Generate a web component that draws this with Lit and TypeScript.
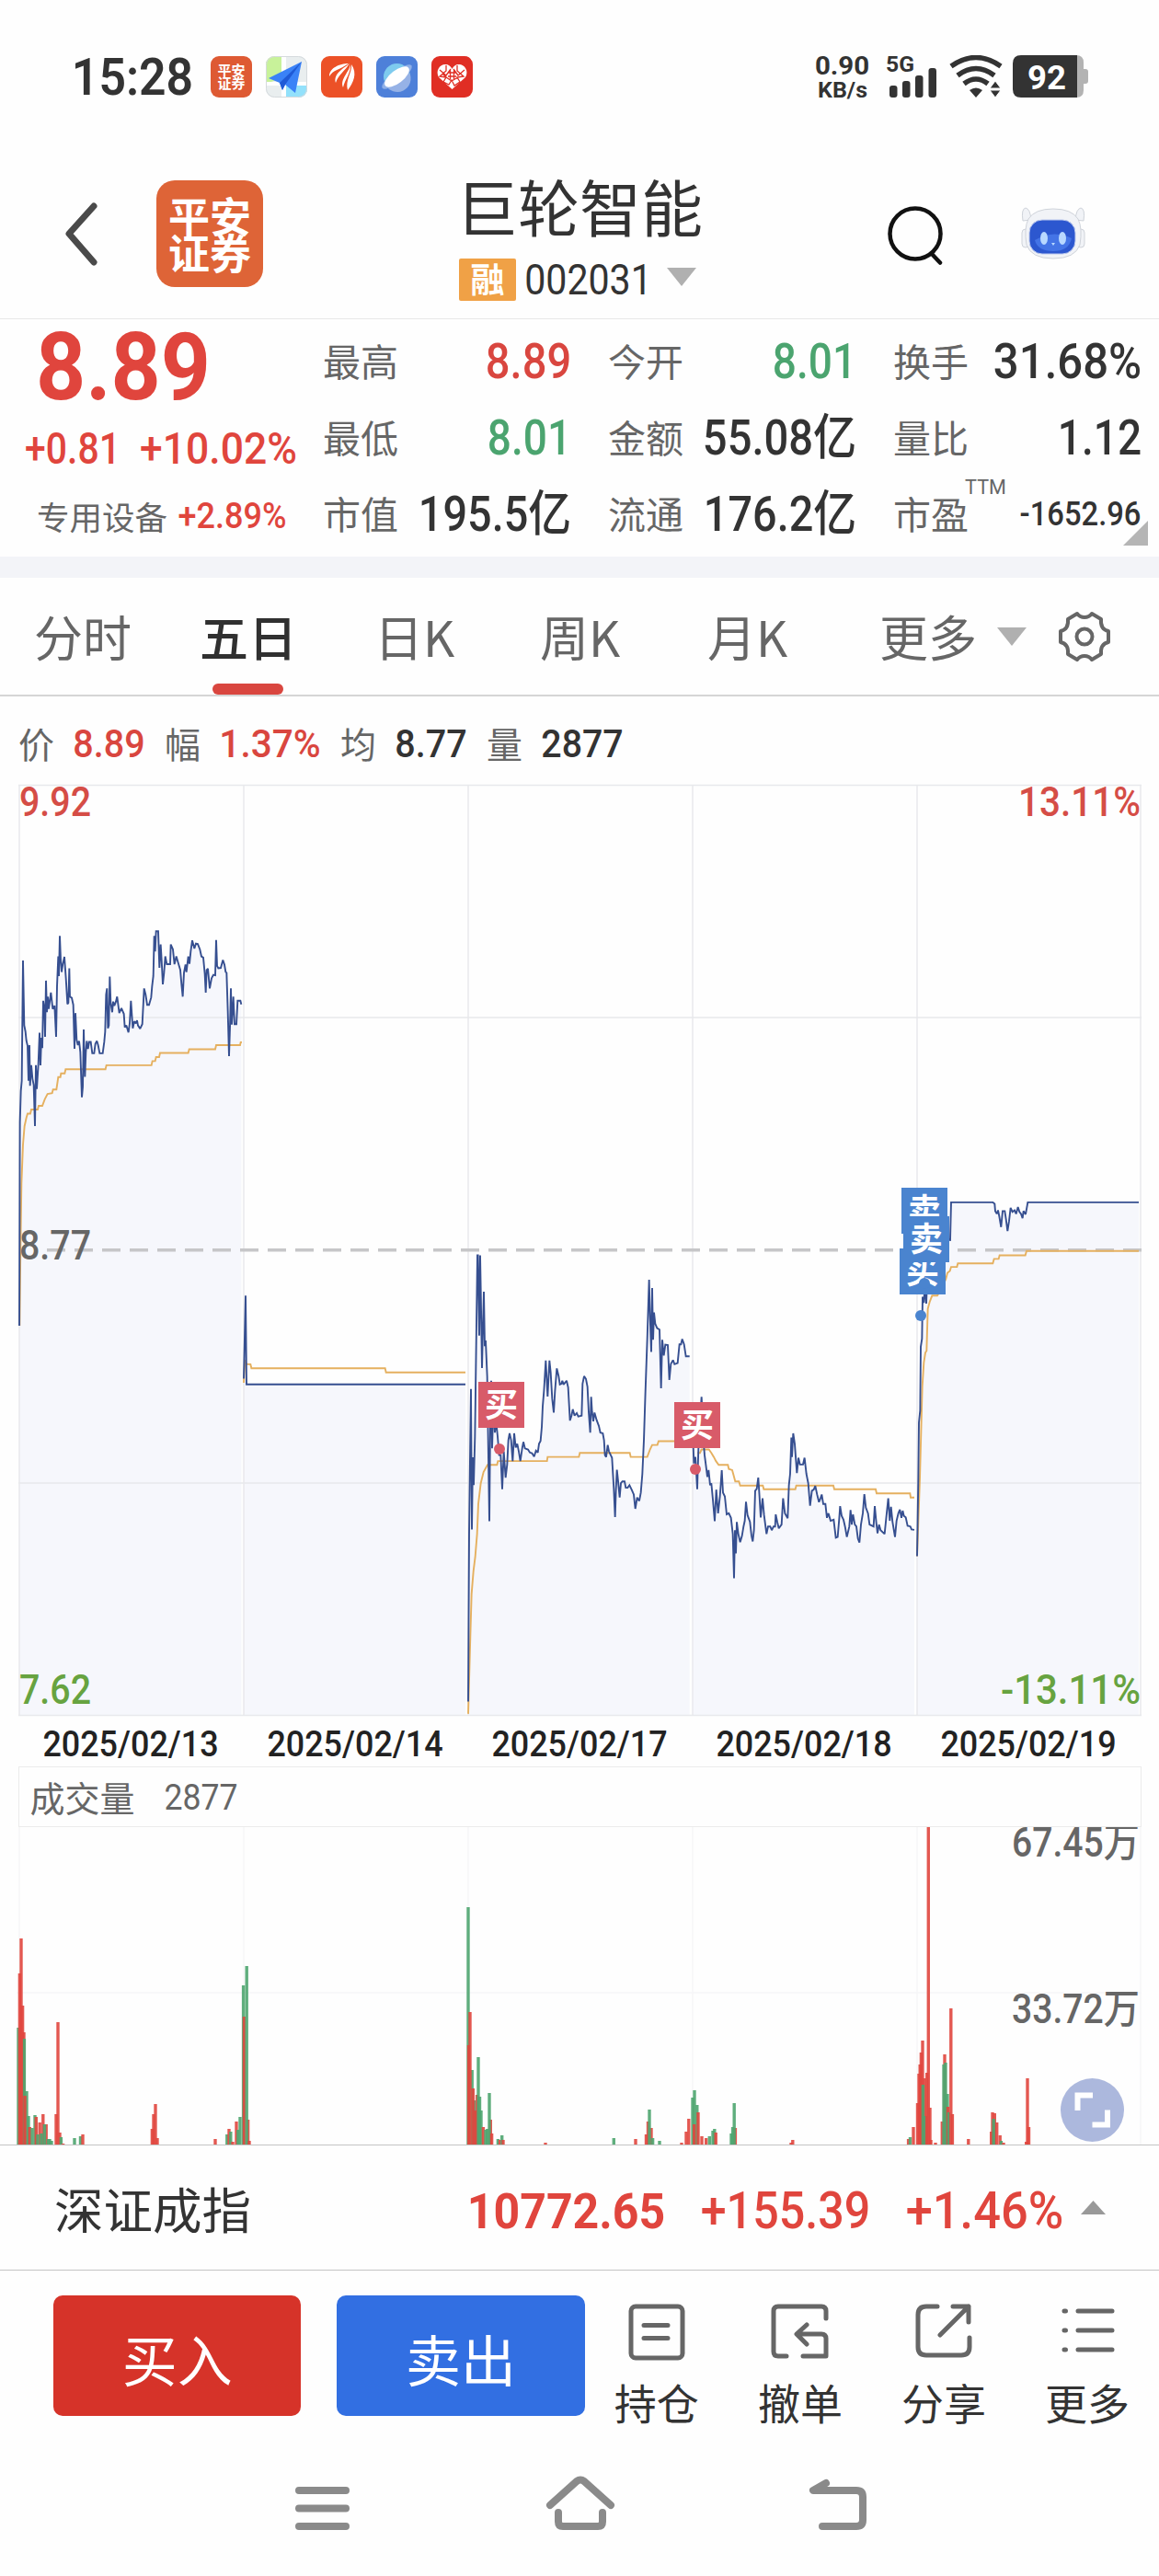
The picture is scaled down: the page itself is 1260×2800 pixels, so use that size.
import { LitElement, html, svg, css } from 'lit';
import { customElement, property } from 'lit/decorators.js';

// Traced in per-session units, see the matching transform on each session.
interface Session {
  transform: string;
  floor: number;
  price: string;
  average: string;
}

type Bar = [x: number, height: number, color: 'r' | 'g'];

const DAY_1 =
  '63,1346 65,850 68,775 71,750 75,457 79,615 83,630 86,652 90,665 93,750 96,663 98,762 102,712 106,745 110,760 114,860 117,712 120,770 125,710 129,633 132,712 135,645 138,670 141,555 145,575 147,643 150,506 153,583 156,545 159,575 166,535 172,575 178,567 183,643 186,520 190,447 192,495 195,397 198,455 201,485 205,465 210,448 215,500 220,563 223,560 226,476 228,545 234,548 239,565 243,672 246,585 250,650 254,663 258,653 262,680 267,790 270,765 273,625 277,740 280,680 283,653 287,672 291,655 296,655 301,683 307,683 311,660 316,653 320,663 325,683 335,683 340,655 343,630 346,540 349,525 352,622 355,615 358,496 361,560 366,583 369,557 373,567 378,557 382,545 389,585 396,573 404,587 407,620 412,615 419,632 423,610 427,555 433,622 438,605 443,610 447,603 450,615 457,623 464,612 470,525 475,540 480,565 486,565 493,547 496,520 500,495 503,397 506,435 509,386 516,386 520,475 524,418 527,455 531,515 535,487 539,447 544,466 555,466 557,418 564,430 569,466 575,447 582,465 588,480 592,515 596,545 600,487 605,467 608,485 614,447 618,465 622,435 627,408 634,428 639,416 645,417 652,430 657,447 663,450 668,490 671,535 674,480 678,477 684,525 690,500 696,492 702,493 705,407 708,470 712,476 720,475 727,456 732,467 736,485 739,487 743,580 747,690 750,620 753,525 756,613 761,545 765,612 771,612 775,555 784,555 787,564';
const DAY_3 =
  '87,1346 90,900 93,700 96,514 99,888 102,696 105,770 109,640 113,400 117,158 119,158 123,372 126,158 128,250 132,458 135,350 138,255 141,400 144,385 149,480 153,700 156,866 159,600 162,492 165,672 169,560 174,630 178,600 183,640 188,690 193,690 198,781 203,680 209,750 214,715 218,650 222,632 227,650 232,706 237,632 242,670 247,660 252,680 257,706 263,672 267,655 272,672 282,675 288,683 295,685 302,694 308,678 314,683 318,660 323,652 327,615 330,560 334,520 340,438 346,534 352,438 356,470 361,540 366,577 370,520 376,459 382,480 386,502 391,500 394,492 398,502 408,492 413,510 419,598 424,585 428,568 434,585 441,578 446,587 457,585 460,500 465,480 471,487 476,508 480,575 485,630 488,535 491,575 495,600 499,577 506,597 513,612 518,630 526,632 530,650 533,690 537,695 542,663 546,680 556,697 562,780 566,855 569,780 572,729 576,760 581,803 585,765 590,760 597,760 601,777 607,777 613,770 620,782 627,795 632,833 638,803 645,812 650,790 655,740 660,650 665,520 671,380 677,223 680,320 684,415 687,245 690,383 693,310 697,340 703,352 711,356 716,512 720,383 725,425 730,396 738,397 743,490 748,447 755,437 760,448 770,445 776,395 781,395 785,381 791,395 797,427 809,427';
const DAY_4 =
  '820,640 823,712 828,695 830,720 834,781 838,670 843,600 848,535 852,600 855,660 858,690 862,715 867,748 871,730 876,770 880,765 885,808 891,866 896,782 902,845 908,800 914,730 918,790 924,800 930,848 937,845 944,857 950,900 954,1018 957,890 960,952 963,868 968,900 974,922 980,905 985,880 989,865 993,814 998,850 1006,868 1011,905 1015,920 1019,890 1023,785 1028,780 1033,750 1037,800 1041,856 1047,805 1052,850 1060,900 1065,880 1072,880 1077,890 1083,880 1088,880 1090,848 1095,868 1100,885 1109,875 1114,805 1120,845 1129,858 1133,770 1137,740 1141,643 1143,695 1147,632 1152,660 1159,738 1164,697 1169,715 1179,715 1184,697 1190,740 1196,765 1202,825 1208,785 1214,782 1219,772 1225,795 1231,815 1236,805 1240,795 1245,820 1252,820 1257,857 1262,845 1269,865 1279,862 1286,910 1292,908 1297,860 1300,826 1305,852 1311,862 1316,880 1322,908 1330,880 1334,836 1338,875 1342,848 1348,875 1353,880 1358,912 1363,923 1368,875 1374,845 1379,794 1384,830 1391,845 1396,875 1409,880 1413,826 1418,870 1422,898 1427,875 1432,890 1445,900 1450,860 1457,805 1462,865 1466,828 1471,868 1479,908 1484,865 1490,845 1495,835 1500,857 1504,838 1508,852 1514,856 1520,878 1529,880 1533,888 1542,889';

const T_WEEK1 = 'translate(0 840) scale(0.33333 0.44643)';
const T_WEEK2 = 'translate(480 1300) scale(0.33333 0.40816)';
const T_LAST = 'translate(880 1260) scale(0.33333 0.43367)';

const SESSIONS: Session[] = [
  {
    transform: T_WEEK1,
    floor: 2295,
    price: DAY_1,
    average:
      '64,1346 67,1150 70,1000 75,905 80,860 86,840 90,830 99,830 102,820 123,820 126,811 138,811 146,795 155,782 170,780 173,771 184,771 190,741 197,741 199,732 211,732 214,722 344,722 347,712 494,712 497,702 506,702 509,692 519,692 522,682 614,682 617,673 702,673 705,663 783,663 785,656 789,656',
  },
  {
    transform: T_WEEK1,
    floor: 2295,
    price: '795,1475 801,1273 804,1489 1518,1489',
    average: '795,1485 799,1430 804,1440 817,1440 820,1450 1256,1450 1259,1460 1518,1460',
  },
  {
    transform: T_WEEK2,
    floor: 1383,
    price: DAY_3,
    average:
      '87,1379 93,1200 98,1060 104,1000 110,960 116,900 120,820 128,765 137,735 150,716 181,716 184,706 344,706 346,695 448,695 451,684 614,684 617,695 671,695 680,675 687,663 704,663 708,653 805,653',
  },
  {
    transform: T_WEEK2,
    floor: 1383,
    price: DAY_4,
    average:
      '835,684 843,684 848,675 872,675 880,684 888,695 895,706 904,716 934,716 937,727 948,730 953,745 958,760 970,760 974,771 1048,771 1051,781 1154,781 1157,771 1278,771 1281,781 1416,781 1419,792 1528,792 1530,803 1542,803',
  },
  {
    transform: T_LAST,
    floor: 1394,
    price:
      '351,995 355,800 357,660 361,630 363,470 367,450 369,345 373,360 376,320 381,362 384,300 400,240 430,200 459,203 462,108 598,108 604,112 606,130 611,137 615,128 619,143 625,170 630,130 637,130 641,150 646,180 651,155 656,122 662,132 669,128 674,137 680,120 685,132 690,137 695,148 698,130 705,138 712,108 1074,108',
    average:
      '351,995 360,800 368,570 373,510 378,485 382,480 386,375 392,358 400,342 417,342 430,325 445,300 450,285 458,280 462,270 481,270 484,261 598,261 602,250 617,250 620,241 704,241 708,230 1074,230',
  },
];

const BARS: Bar[] = [
  [20, 127, 'g'], [21.4, 186, 'r'], [24.6, 151, 'r'], [26, 122, 'r'], [26.4, 115, 'g'], [23, 224, 'r'],
  [29, 58, 'g'], [27, 53, 'r'], [31, 31, 'g'], [32.3, 19, 'r'], [35, 18, 'g'], [38, 32, 'g'],
  [39.3, 30, 'r'], [43.2, 24, 'r'], [41, 11, 'g'], [46.8, 33, 'r'], [45, 12, 'g'], [50.2, 22, 'r'],
  [48.4, 22, 'g'], [52.5, 6, 'g'], [54, 6, 'g'], [56, 4, 'g'], [61, 33, 'r'], [63, 133, 'r'],
  [65, 13, 'r'], [66.4, 8, 'g'], [68.6, 1, 'r'], [81, 7, 'g'], [87.5, 9, 'g'], [90, 11, 'r'],
  [165.4, 17, 'r'], [167, 33, 'r'], [169, 44, 'r'], [171, 7, 'r'], [234, 6, 'r'], [246.8, 11, 'g'],
  [249, 17, 'r'], [250.8, 14, 'g'], [253, 3, 'r'], [257, 25, 'r'], [258.8, 16, 'g'], [261, 30, 'g'],
  [264.6, 173, 'g'], [265.5, 139, 'r'], [269.6, 27, 'r'], [268.2, 194, 'g'], [271, 4, 'r'],
  [509, 258, 'g'], [509.6, 108, 'r'], [513.2, 81, 'g'], [511, 144, 'r'], [515.4, 48, 'g'], [514.3, 61, 'r'],
  [517, 37, 'r'], [518.6, 54, 'r'], [521.5, 52, 'g'], [520, 95, 'g'], [523, 37, 'g'], [525.4, 19, 'r'],
  [528, 16, 'g'], [529.8, 17, 'g'], [533.3, 27, 'r'], [532, 56, 'g'], [534.6, 12, 'r'], [541.4, 6, 'g'],
  [543.6, 5, 'r'], [545.7, 10, 'g'], [547, 5, 'r'], [593, 2, 'r'], [667.3, 7, 'g'], [691, 6, 'r'],
  [702.5, 11, 'r'], [704.5, 25, 'r'], [708, 18, 'r'], [706, 38, 'g'], [709.6, 7, 'g'], [717, 4, 'g'],
  [741, 2, 'r'], [746, 14, 'r'], [748.8, 28, 'r'], [753, 51, 'g'], [757.8, 43, 'g'], [755, 59, 'g'],
  [754.7, 22, 'r'], [759, 35, 'r'], [763, 9, 'r'], [767.7, 7, 'r'], [771.3, 9, 'g'], [775, 15, 'g'],
  [776.8, 17, 'g'], [778.2, 13, 'r'], [795, 12, 'g'], [796.6, 19, 'g'], [799.4, 18, 'r'], [798.2, 45, 'g'],
  [860, 2, 'r'], [861.8, 5, 'r'], [987.6, 6, 'r'], [989.5, 8, 'g'], [993, 19, 'r'], [997.5, 45, 'r'],
  [999, 77, 'r'], [1000.2, 87, 'r'], [1001.4, 100, 'r'], [1003, 113, 'r'], [1005, 72, 'r'], [1003.4, 65, 'g'],
  [1006.4, 31, 'g'], [1007.7, 78, 'r'], [1011, 40, 'r'], [1009.3, 346, 'r'], [1012, 5, 'r'], [1017, 2, 'r'],
  [1024.3, 25, 'r'], [1027, 98, 'r'], [1026, 87, 'g'], [1028, 89, 'g'], [1030, 55, 'g'], [1030.5, 41, 'r'],
  [1031.5, 35, 'g'], [1033.8, 148, 'r'], [1035.4, 33, 'r'], [1052.8, 6, 'r'], [1077.7, 14, 'r'],
  [1079, 35, 'r'], [1081.3, 34, 'r'], [1080.2, 28, 'g'], [1083.7, 24, 'r'], [1087.2, 10, 'r'],
  [1088.4, 4, 'g'], [1091, 2, 'r'], [1115.7, 3, 'r'], [1118.5, 19, 'r'], [1117, 72, 'r'],
];

const GRID_X = [21, 265, 509, 753, 997, 1240];

const CAP_HEIGHT = 0.711;

/** Narrow numerals: `cap` is the digit height, `width` the inked width. */
function fit(text: string, cap: number, width: number, weight = 500) {
  const size = cap / CAP_HEIGHT;
  return html`<svg class="fit" width=${width} height=${cap}>
    <text
      x=${-size * 0.04}
      y=${cap}
      font-size=${size}
      font-weight=${weight}
      textLength=${width + size * 0.08}
      lengthAdjust="spacingAndGlyphs"
    >${text}</text>
  </svg>`;
}

const fitStyles = css`
  .fit {
    display: block;
    flex: none;
    overflow: visible;
    fill: currentColor;
    font-family: Roboto, 'Noto Sans CJK SC', sans-serif;
  }
`;

@customElement('status-bar')
export class StatusBar extends LitElement {
  static styles = [
    fitStyles,
    css`
      :host {
        display: flex;
        align-items: center;
        box-sizing: border-box;
        height: 162px;
        padding: 4px 77px 0 80px;
        color: #333;
      }
      .apps {
        display: flex;
        gap: 15px;
        margin-left: 21px;
      }
      .apps svg {
        display: block;
      }
      .tile {
        font: 700 15px 'Noto Sans CJK SC', sans-serif;
      }
      .speed {
        display: flex;
        flex-direction: column;
        align-items: center;
        gap: 8px;
        margin-left: auto;
      }
      .net {
        margin-left: 19px;
      }
      .net text,
      .battery text {
        font-family: Roboto, sans-serif;
        font-weight: 700;
      }
      .wifi {
        margin-left: 11px;
      }
      .battery {
        margin-left: 11px;
      }
    `,
  ];

  render() {
    return html`
      ${fit('15:28', 39, 128, 600)}
      <div class="apps">
        <svg width="45" height="45">
          <rect width="45" height="45" rx="9" fill="#de5a33" />
          <g class="tile" fill="#fff">
            <text x="7.5" y="21">平安</text>
            <text x="7.5" y="35">证券</text>
          </g>
        </svg>
        <svg width="45" height="45">
          <clipPath id="map"><rect width="45" height="45" rx="9" /></clipPath>
          <g clip-path="url(#map)">
            <rect width="45" height="45" fill="#e9eeef" />
            <path d="M0 0H17V24L0 30Z" fill="#c8f29a" />
            <path d="M22 31H45V45H22Z" fill="#93e1fb" />
            <path d="M17 0h5v45h-5zM0 28h45v4H0z" fill="#fff" />
          </g>
          <path d="M39 6 3 24l12 5 3 8 3-6 11 9Z" fill="#3a82f7" />
          <path d="M39 6 15 29l3 8 3-6Z" fill="#1f5ad6" />
          <rect x=".5" y=".5" width="44" height="44" rx="9" fill="none" stroke="#d5dadd" />
        </svg>
        <svg width="45" height="45">
          <rect width="45" height="45" rx="9" fill="#ec5127" />
          <g fill="#fff">
            <path d="M30 8C20 8 9 13 9 22c4-7 11-7 21-14Z" />
            <path d="M31 8C25 13 13 19 16 29c3-9 10-13 15-21Z" />
            <path d="M32 8C32 16 20 25 24 34c2-9 9-16 8-26Z" />
            <path d="M33 9c1 9-7 17-4 28 6-8 11-18 4-28Z" />
          </g>
        </svg>
        <svg width="45" height="45">
          <rect width="45" height="45" rx="9" fill="#4e80d9" />
          <circle cx="22.500" cy="22.500" r="14.500" fill="#7ecbee" />
          <path d="M10 31A14.500 14.500 0 0 0 36 18Z" fill="#96b2e6" />
          <ellipse cx="22.500" cy="22.500" rx="20" ry="6" transform="rotate(-38 22.500 22.500)" fill="#8fb0e8" />
          <ellipse cx="22.500" cy="22.500" rx="16" ry="7" transform="rotate(-38 22.500 22.500)" fill="#fff" />
        </svg>
        <svg width="45" height="45">
          <rect width="45" height="45" rx="9" fill="#e02e24" />
          <path
            d="M22.500 36 8 23C4 16 9 9 15 9c4 0 6 2 7.500 5C24 11 26 9 30 9c6 0 11 7 7 14Z"
            fill="#fff"
          />
          <path
            d="M9 15l7 6 5-7M16 10v6l-7 6 7 1-3 5 6 3 3-5 3 6 6-4-3-5 7-1-7-6v-6M36 15l-7 6-5-7M18 18h9M18 22h9M20.500 15v10M24.500 15v10M16 23l6 4 7-4M12 19l4 4"
            fill="none"
            stroke="#e02e24"
            stroke-width="1.300"
          />
        </svg>
      </div>
      <div class="speed">${fit('0.90', 20, 57, 700)}${fit('KB/s', 17, 52, 700)}</div>
      <svg class="net" width="58" height="46">
        <text x="0" y="18" font-size="24" textLength="31" lengthAdjust="spacingAndGlyphs" fill="#333">5G</text>
        <g fill="#333">
          <rect x="4" y="33" width="8.500" height="13" rx="3" />
          <rect x="18" y="28" width="8.500" height="18" rx="3" />
          <rect x="32" y="22" width="8.500" height="24" rx="3" />
          <rect x="46.500" y="14" width="8.500" height="32" rx="3" />
        </g>
      </svg>
      <svg class="wifi" width="58" height="46">
        <g fill="none" stroke="#333" stroke-width="5.500">
          <path d="M2 12Q29-7 56 12" />
          <path d="M9 22Q29 7 49 22" />
          <path d="M16 31Q29 21 42 31" />
        </g>
        <path d="M22 38q7-5 14 0l-7 8z" fill="#333" />
        <path d="M50 28l6 8H44zM44 38h12l-6 8z" fill="#333" stroke="#fff" stroke-width="1" />
      </svg>
      <svg class="battery" width="82" height="46">
        <path d="M66 0h3q8 0 8 8v30q0 8-8 8h-3zM77 15h2q3 0 3 3v10q0 3-3 3h-2z" fill="#b3b3b3" />
        <path d="M9 0H70V46H9Q0 46 0 37V9Q0 0 9 0Z" fill="#333" />
        <text x="16" y="37" font-size="37" textLength="42" lengthAdjust="spacingAndGlyphs" fill="#fff">92</text>
      </svg>
    `;
  }
}

@customElement('stock-header')
export class StockHeader extends LitElement {
  static styles = [
    fitStyles,
    css`
      :host {
        display: flex;
        align-items: center;
        height: 184px;
        padding-left: 68px;
        border-bottom: 1px solid #e8e8e8;
        color: #333;
      }
      svg {
        flex: none;
      }
      .logo {
        display: flex;
        flex-direction: column;
        justify-content: center;
        align-items: center;
        width: 116px;
        height: 116px;
        margin-left: 64px;
        border-radius: 20px;
        background: #de6437;
        color: #fff;
        font: 700 45px/40px 'Noto Sans CJK SC', sans-serif;
      }
      .name {
        width: 270px;
        margin-left: 213px;
        padding-top: 7px;
      }
      .title {
        margin-left: -3px;
        font: 400 67px/67px 'Noto Sans CJK SC', sans-serif;
        white-space: nowrap;
      }
      .code {
        display: flex;
        align-items: center;
        margin-top: 25px;
      }
      .tag {
        width: 62px;
        height: 46px;
        margin-right: 11px;
        border-radius: 2px;
        background: #f0a146;
        color: #fff;
        font: 700 37px/43px 'Noto Sans CJK SC', sans-serif;
        text-align: center;
      }
      .drop {
        margin: -5px 0 0 18px;
      }
      .search {
        margin-left: 194px;
      }
      .robot {
        margin-left: 81px;
      }
    `,
  ];

  render() {
    return html`
      <svg width="38" height="70">
        <path d="M34 5 7 35 34 66" fill="none" stroke="#4a4a4a" stroke-width="7" stroke-linecap="round" stroke-linejoin="round" />
      </svg>
      <div class="logo"><span>平安</span><span>证券</span></div>
      <div class="name">
        <div class="title">巨轮智能</div>
        <div class="code">
          <span class="tag">融</span>
          ${fit('002031', 33, 135, 400)}
          <svg class="drop" width="32" height="20"><path d="M0 0H32L16 20Z" fill="#b0b0b0" /></svg>
        </div>
      </div>
      <svg class="search" width="64" height="68">
        <circle cx="32" cy="34" r="27.500" fill="none" stroke="#111" stroke-width="4.500" />
        <path d="M50 56 59 65.500" stroke="#111" stroke-width="4.500" stroke-linecap="round" />
      </svg>
      <svg class="robot" width="76" height="62" viewBox="1108 224 76 62">
        <g fill="#f1f3f7" stroke="#cfd3da">
          <path d="M1112 241q-2-13 3-14 5 1 6 13zM1178 241q2-13-3-14-5 1-6 13z" />
          <rect x="1111" y="250" width="8" height="20" rx="4" />
          <rect x="1171" y="250" width="8" height="20" rx="4" />
          <path d="M1145 228q20 0 27 11 5 10 2 28-5 15-29 15t-29-15q-3-18 2-28 7-11 27-11Z" />
        </g>
        <rect x="1119" y="240" width="50" height="37" rx="14" fill="#2c57cf" stroke="#bcc9ee" />
        <path d="M1125 262q20-12 40-2-3 14-20 14t-20-12Z" fill="#4474e6" />
        <g fill="#b8d8ff">
          <ellipse cx="1135" cy="260" rx="4" ry="7" />
          <ellipse cx="1155" cy="260" rx="4" ry="7" />
          <path d="M1143 265h4l-2 3z" />
        </g>
      </svg>
    `;
  }
}

@customElement('quote-panel')
export class QuotePanel extends LitElement {
  static styles = [
    fitStyles,
    css`
      :host {
        display: flex;
        position: relative;
        box-sizing: border-box;
        height: 258px;
        color: #333;
      }
      .now {
        width: 351px;
        padding: 15px 0 0 29px;
        box-sizing: border-box;
        color: #e0453d;
      }
      .last {
        padding-left: 14px;
      }
      .change {
        display: flex;
        gap: 25px;
        margin-top: 36px;
      }
      .sector {
        display: flex;
        align-items: center;
        gap: 13px;
        margin: 38px 0 0 11px;
      }
      .sector span {
        color: #666;
        font: 400 35.5px/37px 'Noto Sans CJK SC', sans-serif;
      }
      .grid {
        display: grid;
        grid-template-columns: repeat(3, 268px);
        grid-template-rows: repeat(3, 83px);
        column-gap: 42px;
        padding-top: 3px;
      }
      .cell {
        display: flex;
        align-items: center;
        justify-content: space-between;
      }
      .label {
        position: relative;
        color: #666;
        font: 400 41px/41px 'Noto Sans CJK SC', sans-serif;
      }
      .ttm {
        position: absolute;
        left: 79px;
        top: -16px;
      }
      .up {
        color: #d9463f;
      }
      .down {
        color: #4ba46f;
      }
      .corner {
        position: absolute;
        right: 12px;
        bottom: 12px;
      }
    `,
  ];

  private cell(label: string, value: string, width: number, tone = '') {
    const ratio = label === '市盈';
    return html`<div class="cell">
      <span class="label">${label}${ratio ? html`<span class="ttm">${fit('TTM', 16, 43, 400)}</span>` : ''}</span>
      <span class=${tone}>${fit(value, ratio ? 26 : 38, width)}</span>
    </div>`;
  }

  render() {
    return html`
      <div class="now">
        <div class="last">${fit('8.89', 72, 182, 700)}</div>
        <div class="change">${fit('+0.81', 34, 100)}${fit('+10.02%', 34, 167)}</div>
        <div class="sector"><span>专用设备</span>${fit('+2.89%', 27, 115)}</div>
      </div>
      <div class="grid">
        ${this.cell('最高', '8.89', 89, 'up')} ${this.cell('今开', '8.01', 87, 'down')}
        ${this.cell('换手', '31.68%', 157)} ${this.cell('最低', '8.01', 87, 'down')}
        ${this.cell('金额', '55.08亿', 163)} ${this.cell('量比', '1.12', 87)}
        ${this.cell('市值', '195.5亿', 162)} ${this.cell('流通', '176.2亿', 162)}
        ${this.cell('市盈', '-1652.96', 129)}
      </div>
      <svg class="corner" width="27" height="27"><path d="M27 0V27H0Z" fill="#b5b5b5" /></svg>
    `;
  }
}

@customElement('period-tabs')
export class PeriodTabs extends LitElement {
  @property() active = '五日';

  static styles = css`
    :host {
      display: grid;
      grid-template-columns: 180px 190px 180px 182px 187px 128px 64px 1fr;
      align-items: center;
      height: 127px;
      padding-left: 37px;
      border-top: 23px solid #f3f4f8;
      border-bottom: 2px solid #d5d5d5;
      color: #666;
      font: 400 53px/53px 'Noto Sans CJK SC', sans-serif;
    }
    .tab {
      position: relative;
      display: flex;
      align-items: center;
      height: 127px;
    }
    .active {
      color: #303030;
      font-weight: 500;
    }
    .active::after {
      content: '';
      position: absolute;
      left: 14px;
      bottom: 0;
      width: 77px;
      height: 12px;
      border-radius: 6px;
      background: #d9463f;
    }
  `;

  render() {
    return html`
      ${['分时', '五日', '日K', '周K', '月K', '更多'].map(
        (t) => html`<span class="tab ${t === this.active ? 'active' : ''}">${t}</span>`
      )}
      <svg width="32" height="20"><path d="M0 0H32L16 20Z" fill="#b0b0b0" /></svg>
      <svg width="62" height="62" viewBox="-31 -31 62 62">
        <g fill="none" stroke="#666" stroke-width="4" stroke-linejoin="round">
          <path
            d="M-8-25Q-5-21 0-21T8-25L18-19Q17-8 26-6V6Q17 8 18 19L8 25Q5 21 0 21T-8 25L-18 19Q-17 8-26 6V-6Q-17-8-18-19Z"
          />
          <circle r="8.500" />
        </g>
      </svg>
    `;
  }
}

@customElement('price-chart')
export class PriceChart extends LitElement {
  static styles = [
    fitStyles,
    css`
      :host {
        display: block;
      }
      .info {
        display: flex;
        align-items: center;
        height: 96px;
        padding: 5px 0 0 20px;
        box-sizing: border-box;
        color: #333;
      }
      .info .key {
        margin-right: 22px;
        color: #666;
        font: 400 39px/39px 'Noto Sans CJK SC', sans-serif;
      }
      .info .val {
        margin-right: 23px;
      }
      .up {
        color: #d9463f;
      }
      .plot {
        display: block;
        margin-left: 20px;
        overflow: visible;
      }
      .plot text {
        font-family: Roboto, sans-serif;
        font-weight: 500;
        font-size: 43.500px;
      }
      .plot .mark {
        font: 700 36px 'Noto Sans CJK SC', sans-serif;
        fill: #fff;
        text-anchor: middle;
      }
      .area {
        fill: #f6f7fc;
      }
      .price,
      .average {
        fill: none;
        stroke-width: 1.900;
        stroke-linejoin: miter;
        stroke-miterlimit: 2;
      }
      .price {
        stroke: #364f90;
      }
      .average {
        stroke: #e5b05f;
      }
      .dates {
        display: grid;
        grid-template-columns: repeat(5, 244px);
        justify-items: center;
        align-items: center;
        height: 55px;
        padding: 4px 0 0 19.5px;
        box-sizing: border-box;
        color: #222;
      }
    `,
  ];

  private mark(x: number, y: number, text: string, color: string) {
    return svg`
      <rect x=${x} y=${y} width="50" height="50" fill=${color} />
      <text class="mark" x=${x + 25} y=${y + 38}>${text}</text>
    `;
  }

  render() {
    return html`
      <div class="info">
        <span class="key">价</span><span class="val up">${fit('8.89', 30, 75)}</span>
        <span class="key">幅</span><span class="val up">${fit('1.37%', 30, 107)}</span>
        <span class="key">均</span><span class="val">${fit('8.77', 30, 75)}</span>
        <span class="key">量</span><span class="val">${fit('2877', 30, 86)}</span>
      </div>
      <svg class="plot" width="1221" height="1012" viewBox="20 853 1221 1012">
        ${SESSIONS.map((s) => {
          const points = s.price.split(' ');
          const first = points[0].split(',')[0];
          const end = points[points.length - 1].split(',')[0];
          return svg`<polygon class="area" transform=${s.transform}
            points="${first},${s.floor} ${s.price} ${end},${s.floor}" />`;
        })}
        <g fill="none" stroke="#e8e9ec" stroke-width="1.500">
          ${GRID_X.map((x) => svg`<path d="M${x} 853V1865" />`)}
          <path d="M20 853.5H1241M20 1106H1241M20 1612H1241M20 1864.500H1241" />
        </g>
        <path d="M51 1358.800H1241" stroke="#c6c6c8" stroke-width="3.500" stroke-dasharray="20 10" />
        ${SESSIONS.map(
          (s) => svg`<g transform=${s.transform}>
            <polyline class="average" vector-effect="non-scaling-stroke" points=${s.average} />
            <polyline class="price" vector-effect="non-scaling-stroke" points=${s.price} />
          </g>`
        )}
        <g lengthAdjust="spacingAndGlyphs">
          <text x="21" y="887" fill="#d54d46" textLength="78" lengthAdjust="spacingAndGlyphs">9.92</text>
          <text x="1107" y="887" fill="#d54d46" textLength="133" lengthAdjust="spacingAndGlyphs">13.11%</text>
          <text x="21" y="1369" fill="#666" textLength="78" lengthAdjust="spacingAndGlyphs">8.77</text>
          <text x="21" y="1852" fill="#67a340" textLength="78" lengthAdjust="spacingAndGlyphs">7.62</text>
          <text x="1088" y="1852" fill="#67a340" textLength="152" lengthAdjust="spacingAndGlyphs">-13.11%</text>
        </g>
        ${this.mark(520, 1502, '买', '#d85b69')}
        ${this.mark(733, 1524, '买', '#d85b69')}
        <circle cx="543" cy="1575" r="6" fill="#d85b69" />
        <circle cx="756" cy="1597" r="6" fill="#d85b69" />
        ${this.mark(980, 1291, '卖', '#4a84cf')}
        ${this.mark(978, 1357, '买', '#4a84cf')}
        ${this.mark(982, 1322, '卖', '#4a84cf')}
        <circle cx="1005" cy="1395" r="6" fill="#4a84cf" />
        <circle cx="1001" cy="1430" r="6" fill="#4a84cf" />
      </svg>
      <div class="dates">
        ${['13', '14', '17', '18', '19'].map((d) => fit(`2025/02/${d}`, 28, 188))}
      </div>
    `;
  }
}

@customElement('volume-chart')
export class VolumeChart extends LitElement {
  static styles = [
    fitStyles,
    css`
      :host {
        display: block;
        position: relative;
        border-bottom: 1px solid #c4c4c4;
      }
      .head {
        display: flex;
        align-items: center;
        box-sizing: border-box;
        width: 1221px;
        height: 66px;
        margin-left: 19.5px;
        padding-left: 12px;
        border: 1px solid #ebebeb;
        color: #666;
      }
      .head span {
        margin-right: 33px;
        font: 400 38px/38px 'Noto Sans CJK SC', sans-serif;
      }
      .plot {
        display: block;
        margin-left: 18px;
      }
      .plot text {
        font-family: Roboto, 'Noto Sans CJK SC', sans-serif;
        font-weight: 500;
        font-size: 43.500px;
        fill: #666;
      }
      .r {
        fill: #e0463e;
      }
      .g {
        fill: #4ea56f;
      }
      .expand {
        position: absolute;
        right: 38px;
        bottom: 3px;
      }
    `,
  ];

  render() {
    return html`
      <div class="head"><span>成交量</span>${fit('2877', 28, 77, 400)}</div>
      <svg class="plot" width="1223" height="345" viewBox="18 1986 1223 345">
        <path
          d="M18 2166H1241M21 1985V2331M265 1985V2331M509 1985V2331M753 1985V2331M997 1985V2331M1240 1985V2331"
          stroke="#f6f6f8"
          stroke-width="1.500"
        />
        ${BARS.map(
          ([x, h, c]) => svg`<rect class=${c} x=${x - 1.7} y=${2331 - h} width="3.400" height=${h} opacity="0.900" />`
        )}
        <text x="1100" y="2018" textLength="139" lengthAdjust="spacingAndGlyphs">67.45万</text>
        <text x="1100" y="2199" textLength="139" lengthAdjust="spacingAndGlyphs">33.72万</text>
      </svg>
      <svg class="expand" width="69" height="69">
        <circle cx="34.500" cy="34.500" r="34.500" fill="#acb8dd" />
        <path d="M18.500 35V18.500H35M34.500 50.500H51V34.500" fill="none" stroke="#fff" stroke-width="6" />
      </svg>
    `;
  }
}

@customElement('index-bar')
export class IndexBar extends LitElement {
  static styles = [
    fitStyles,
    css`
      :host {
        display: flex;
        align-items: center;
        height: 135px;
        padding: 0 58px 0 59px;
        border-bottom: 1px solid #c4c4c4;
        color: #e0453d;
      }
      .name {
        width: 450.5px;
        color: #333;
        font: 400 53.5px/60px 'Noto Sans CJK SC', sans-serif;
      }
      .points {
        margin: 6px 43px 0 0;
      }
      .delta {
        display: flex;
        gap: 43px;
        padding-top: 5px;
      }
      .caret {
        margin-left: 21px;
      }
    `,
  ];

  render() {
    return html`
      <span class="name">深证成指</span>
      <span class="points">${fit('10772.65', 38.5, 211, 700)}</span>
      <span class="delta">${fit('+155.39', 40, 180)}${fit('+1.46%', 40, 167)}</span>
      <svg class="caret" width="27" height="15"><path d="M0 15H27L13.500 0Z" fill="#999" /></svg>
    `;
  }
}

@customElement('trade-bar')
export class TradeBar extends LitElement {
  static styles = css`
    :host {
      display: flex;
      height: 182px;
      padding: 27px 0 0 58px;
      box-sizing: border-box;
      font-family: 'Noto Sans CJK SC', sans-serif;
    }
    .order {
      width: 270px;
      height: 131px;
      margin-right: 39px;
      border-radius: 10px;
      color: #fff;
      font-size: 60px;
      line-height: 136px;
      text-align: center;
    }
    .buy {
      background: #d63329;
    }
    .sell {
      margin-right: 0;
      background: #326fe2;
    }
    .tool {
      display: flex;
      flex-direction: column;
      align-items: center;
      gap: 19px;
      width: 156.4px;
      padding-top: 7px;
      color: #333;
      font-size: 46px;
      line-height: 46px;
    }
    .tool svg {
      fill: none;
      stroke: #666;
      stroke-width: 5;
      stroke-linecap: round;
      stroke-linejoin: round;
    }
  `;

  render() {
    return html`
      <div class="order buy">买入</div>
      <div class="order sell">卖出</div>
      <div class="tool">
        <svg width="66" height="66">
          <rect x="5" y="5" width="56" height="56" rx="5" />
          <path d="M19 25.500H45M19 39.500H45" />
        </svg>
        持仓
      </div>
      <div class="tool">
        <svg width="66" height="66">
          <path d="M61 18V10Q61 5 56 5H9Q4 5 4 10V54Q4 59 9 59H18M36 59H61V40Q61 35 56 35H30M40 25 29 35 40 46" />
        </svg>
        撤单
      </div>
      <div class="tool">
        <svg width="66" height="66">
          <path d="M26 5H14Q5 5 5 14V49Q5 58 14 58H52Q61 58 61 49V39M43 5H60V22M60 5 29 36" />
        </svg>
        分享
      </div>
      <div class="tool">
        <svg width="66" height="66">
          <path d="M8 10H9.500M8 31H9.500M8 52H9.500M23 10H60M23 31H60M23 52H60" />
        </svg>
        更多
      </div>
    `;
  }
}

@customElement('nav-bar')
export class NavBar extends LitElement {
  static styles = css`
    :host {
      display: flex;
      height: 150px;
      padding: 36px 0 0 314px;
      box-sizing: border-box;
      gap: 206px;
    }
    svg {
      fill: none;
      stroke: #8a8a8a;
      stroke-width: 8;
      stroke-linecap: round;
      stroke-linejoin: round;
    }
  `;

  render() {
    return html`
      <svg width="73" height="72"><path d="M11 21H62M11 40.500H62M11 60H62" /></svg>
      <svg width="76" height="72"><path d="M5 37 34 11Q38 8 42 11L71 37M14 45V55Q14 60 19 60H57Q62 60 62 55V45" /></svg>
      <svg width="76" height="72"><path d="M23 13 9 21H56Q63 21 63 28V53Q63 60 56 60H19" /></svg>
    `;
  }
}

@customElement('app-root')
export class AppRoot extends LitElement {
  static styles = css`
    :host {
      display: block;
      width: 1260px;
      height: 2800px;
      overflow: hidden;
      background: #fefefe;
    }
  `;

  render() {
    return html`
      <status-bar></status-bar>
      <stock-header></stock-header>
      <quote-panel></quote-panel>
      <period-tabs></period-tabs>
      <price-chart></price-chart>
      <volume-chart></volume-chart>
      <index-bar></index-bar>
      <trade-bar></trade-bar>
      <nav-bar></nav-bar>
    `;
  }
}
